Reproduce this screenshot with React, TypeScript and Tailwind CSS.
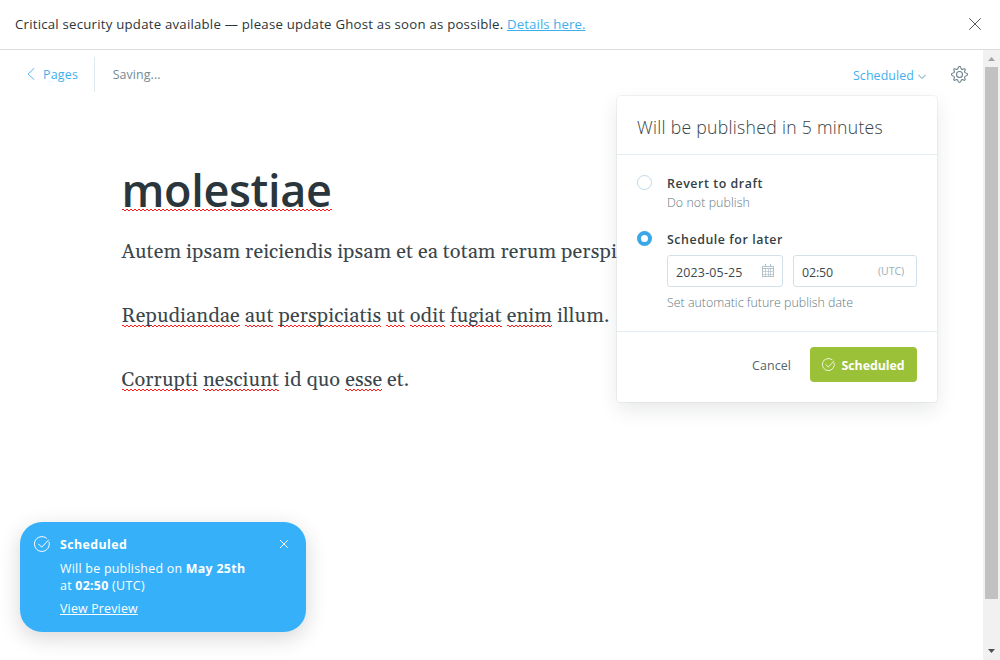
import type { ReactNode } from 'react';

const squiggle =
  '[background-image:linear-gradient(90deg,#ff1a1a_50%,transparent_50%),linear-gradient(90deg,transparent_50%,#ff1a1a_50%)] bg-repeat-x [background-size:4px_1px]';

function Misspelled({ children, heading = false }: { children: ReactNode; heading?: boolean }) {
  const place = heading
    ? '[background-position:0_calc(100%_-_10px),0_calc(100%_-_9px)]'
    : '[background-position:0_calc(100%_-_3px),0_calc(100%_-_2px)]';
  return <span className={`${squiggle} ${place}`}>{children}</span>;
}

function CheckCircle({ className }: { className: string }) {
  return (
    <svg viewBox="0 0 24 24" fill="none" stroke="currentColor" strokeWidth="1.5" strokeLinecap="round" strokeLinejoin="round" className={className}>
      <path d="M22.7 9.2a11.2 11.2 0 1 1-3.9-6" />
      <path d="M7 12.2l4.6 4.6L21.8 6" />
    </svg>
  );
}

function Cross({ className }: { className: string }) {
  return (
    <svg viewBox="0 0 24 24" fill="none" stroke="currentColor" strokeLinecap="round" className={className}>
      <path d="M1 1l22 22M23 1L1 23" />
    </svg>
  );
}

function Gear() {
  return (
    <svg viewBox="0 0 24 24" fill="none" stroke="currentColor" strokeWidth="1.5" strokeLinejoin="round" className="size-[17px] text-[#6b8089]">
      <circle cx="12" cy="12" r="4.2" />
      <path d="M13.700 2l.6 1.500a2 2 0 0 0 2.600 1.100l1.500-.6a1.200 1.200 0 0 1 1.600 1.600l-.6 1.500a2 2 0 0 0 1.100 2.600l1.600.7a1.700 1.700 0 0 1 0 3.200l-1.600.7a2 2 0 0 0-1.100 2.600l.6 1.500a1.200 1.200 0 0 1-1.600 1.600l-1.500-.6a2 2 0 0 0-2.600 1.100l-.7 1.600a1.700 1.700 0 0 1-3.200 0l-.7-1.600a2 2 0 0 0-2.600-1.100l-1.500.6A1.200 1.200 0 0 1 4 18.400l.6-1.500a2 2 0 0 0-1.100-2.600l-1.600-.7a1.700 1.700 0 0 1 0-3.200l1.600-.7a2 2 0 0 0 1.100-2.600L4 5.600A1.200 1.200 0 0 1 5.600 4l1.500.6a2 2 0 0 0 2.600-1.100l.7-1.600a1.700 1.700 0 0 1 3.300.1z" />
    </svg>
  );
}

function Calendar() {
  return (
    <svg viewBox="0 0 12 13" fill="none" stroke="currentColor" className="mb-0.5 h-[13px] w-3 text-[#b3c1ca]" shapeRendering="crispEdges">
      <path d="M.5 2.500h11v10H.5zM0 4.500h12M3.500 0v3M8.500 0v3" />
      <path d="M3.500 5v7M6 5v7M8.500 5v7M1 7.500h10M1 10h10" strokeWidth=".7" />
    </svg>
  );
}

function Banner() {
  return (
    <div className="flex h-[50px] shrink-0 items-center justify-between border-b border-[#dddddd] pr-[19px] pl-[15px]">
      <p className="text-[13.2px] tracking-[0.234px] whitespace-nowrap text-[#2a353b]">
        Critical security update available — please update Ghost as soon as possible.{' '}
        <a className="tracking-[0.1px] text-[#3eb0ef] underline underline-offset-1">Details here.</a>
      </p>
      <Cross className="mb-0.5 size-3 stroke-2 text-[#4d5b63]" />
    </div>
  );
}

function Toolbar() {
  return (
    <header className="flex h-[49px] items-center pr-[15px] pl-[27px]">
      <a className="flex h-[35px] items-center border-r border-[#dfe9ee] pr-[15.5px] text-[12.4px] tracking-[0.25px] text-[#3eb0ef]">
        <svg viewBox="0 0 8 12" fill="none" stroke="currentColor" strokeWidth=".9" strokeLinecap="round" strokeLinejoin="round" className="mr-2 mb-px h-3 w-2">
          <path d="M7 .5L1 6l6 5.500" />
        </svg>
        <span className="pt-0.5">Pages</span>
      </a>
      <span className="ml-[18px] pt-0.5 text-[12.4px] tracking-[0.1px] text-[#738a94]">Saving...</span>
      <button className="mt-1 ml-auto flex items-center text-[12.4px] tracking-[0.1px] text-[#3eb0ef]">
        Scheduled
        <svg viewBox="0 0 8 6" fill="none" stroke="currentColor" strokeLinecap="round" strokeLinejoin="round" className="mt-0.5 ml-1 h-1.5 w-2 text-[#5a9ab8]">
          <path d="M.5 1L4 4.500 7.500 1" />
        </svg>
      </button>
      <span className="mb-px ml-[25px]">
        <Gear />
      </span>
    </header>
  );
}

function Editor() {
  return (
    <main className="pl-[121.5px] whitespace-nowrap">
      <h1 className="pt-[61px] text-[45px] leading-[60px] font-semibold tracking-[-0.35px] text-[#2b363c]">
        <Misspelled heading>molestiae</Misspelled>
      </h1>
      <div className="mt-4 space-y-8 font-[Gelasio,'Liberation_Serif',serif] text-[20px] leading-8 tracking-[0.1px] text-[#3a464c]">
        <p>Autem ipsam reiciendis ipsam et ea totam rerum perspiciatis.</p>
        <p>
          <Misspelled>Repudiandae</Misspelled> <Misspelled>aut</Misspelled> <Misspelled>perspiciatis</Misspelled>{' '}
          <Misspelled>ut</Misspelled> <Misspelled>odit</Misspelled> <Misspelled>fugiat</Misspelled>{' '}
          <Misspelled>enim</Misspelled> illum.
        </p>
        <p>
          <Misspelled>Corrupti</Misspelled> <Misspelled>nesciunt</Misspelled> id quo <Misspelled>esse</Misspelled> et.
        </p>
      </div>
    </main>
  );
}

function PublishMenu() {
  return (
    <section className="absolute top-[46px] left-[617px] w-[320px] rounded bg-white shadow-[0_0_0_1px_rgba(99,114,130,0.08),0_8px_20px_rgba(27,39,51,0.1)]">
      <h2 className="flex h-[59px] items-center border-b border-[#e3ecf3] px-5 pt-1 text-[17.6px] font-light tracking-[0.3px] text-[#343f44]">
        Will be published in 5 minutes
      </h2>
      <div className="h-[177px] border-b border-[#e3ecf3] px-5 pt-5">
        <div className="flex">
          <span className="size-[15px] rounded-full border border-[#bfd9ea]" />
          <div className="ml-[15px]">
            <p className="text-[12.4px] leading-[18px] font-semibold tracking-[0.56px] text-[#343f44]">Revert to draft</p>
            <p className="text-[12.4px] leading-5 font-light tracking-[0.07px] text-[#637a84]">Do not publish</p>
          </div>
        </div>
        <div className="mt-[18px] flex">
          <span className="size-[15px] rounded-full border-4 border-[#3aa7e8]" />
          <div className="ml-[15px]">
            <p className="text-[12.4px] leading-[18px] font-semibold tracking-[0.55px] text-[#343f44]">Schedule for later</p>
            <div className="mt-1.5 flex gap-2.5">
              <div className="flex h-8 w-[116px] items-center justify-between rounded-[3px] border border-[#d2e0e9] px-2 text-[12.4px] tracking-[0.2px] text-[#3a484f]">
                <span className="mt-1">2023-05-25</span>
                <Calendar />
              </div>
              <div className="flex h-8 w-[124px] items-center justify-between rounded-[3px] border border-[#d2e0e9] pr-3 pl-2 text-[12.4px] tracking-[-0.1px] text-[#3a484f]">
                <span className="mt-1">02:50</span>
                <span className="mt-px text-[10.6px] text-[#9badb6]">(UTC)</span>
              </div>
            </div>
            <p className="mt-1.5 text-[12.4px] leading-5 font-light text-[#637a84]">Set automatic future publish date</p>
          </div>
        </div>
      </div>
      <footer className="flex h-[70px] items-start justify-end px-5 pt-[15px]">
        <button className="mr-[19px] h-[35px] pt-1 text-[12.4px] tracking-[0.1px] text-[#54666d]">Cancel</button>
        <button className="flex h-[35px] w-[107px] items-center rounded bg-[#9bc139] pl-3 text-[12.4px] font-bold tracking-[-0.05px] text-white">
          <CheckCircle className="mr-[6.5px] size-[13px]" />
          <span className="pt-1">Scheduled</span>
        </button>
      </footer>
    </section>
  );
}

function Scrollbar() {
  return (
    <div className="flex w-[17px] shrink-0 flex-col items-center bg-[#f1f1f1]">
      <svg viewBox="0 0 17 17" className="size-[17px]" fill="#a3a3a3">
        <path d="M5 11h7L8.500 7z" />
      </svg>
      <div className="h-[532px] w-[13px] bg-[#c1c1c1]" />
      <svg viewBox="0 0 17 17" className="mt-auto size-[17px]" fill="#505050">
        <path d="M5 6h7L8.500 10z" />
      </svg>
    </div>
  );
}

function Toast() {
  return (
    <aside className="absolute top-[522px] left-5 flex h-[110px] w-[286px] rounded-[22px] bg-[#36b1f9] pt-3.5 pr-[18px] pl-3.5 text-[12.4px] text-white shadow-[0_6px_22px_rgba(0,0,0,0.16)]">
      <CheckCircle className="size-4 shrink-0" />
      <div className="ml-2.5 flex-1 leading-[17px] tracking-[0.26px]">
        <p className="font-bold tracking-[0.4px]">Scheduled</p>
        <p className="mt-[7px]">
          Will be published on <b className="tracking-[0.3px]">May 25th</b>
          <br />
          at <b>02:50</b> <span className="tracking-[0.4px]">(UTC)</span>
        </p>
        <a className="mt-1.5 block tracking-[0.18px] underline underline-offset-1">View Preview</a>
      </div>
      <Cross className="mt-1 size-2 stroke-3" />
    </aside>
  );
}

export default function App() {
  return (
    <div className="relative flex h-[660px] w-[1000px] flex-col overflow-hidden bg-white font-['Open_Sans','Noto_Sans',sans-serif]">
      <Banner />
      <div className="flex min-h-0 flex-1">
        <div className="relative min-w-0 flex-1">
          <Toolbar />
          <Editor />
          <PublishMenu />
        </div>
        <Scrollbar />
      </div>
      <Toast />
    </div>
  );
}
